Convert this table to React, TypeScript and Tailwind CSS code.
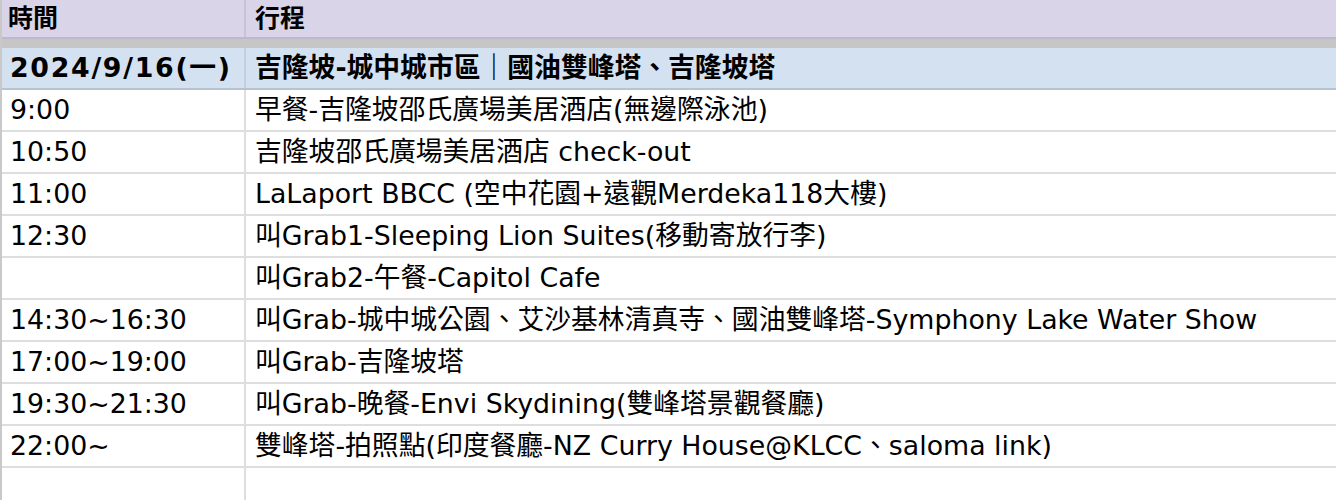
const rows = [
  { time: "9:00", plan: "早餐-吉隆坡邵氏廣場美居酒店(無邊際泳池)" },
  { time: "10:50", plan: "吉隆坡邵氏廣場美居酒店 check-out" },
  { time: "11:00", plan: "LaLaport BBCC (空中花園+遠觀Merdeka118大樓)" },
  { time: "12:30", plan: "叫Grab1-Sleeping Lion Suites(移動寄放行李)" },
  { time: "", plan: "叫Grab2-午餐-Capitol Cafe" },
  { time: "14:30~16:30", plan: "叫Grab-城中城公園、艾沙基林清真寺、國油雙峰塔-Symphony Lake Water Show" },
  { time: "17:00~19:00", plan: "叫Grab-吉隆坡塔" },
  { time: "19:30~21:30", plan: "叫Grab-晚餐-Envi Skydining(雙峰塔景觀餐廳)" },
  { time: "22:00~", plan: "雙峰塔-拍照點(印度餐廳-NZ Curry House@KLCC、saloma link)" },
  { time: "", plan: "" },
]

export default function App() {
  return (
    <div className="w-[1336px] h-[500px] overflow-hidden bg-white border-l-2 border-[#c9c9c9] font-['DejaVu_Sans','Noto_Sans_CJK_TC',sans-serif] text-black">
      {/* header */}
      <div className="flex h-[39px] bg-[#d9d4e7] border-b-2 border-[#bdb8cc] text-[25px] font-bold">
        <div className="w-[244px] shrink-0 border-r-2 border-[#c8c3d6] pl-[6px] flex items-center">時間</div>
        <div className="flex-1 pl-[9px] flex items-center">行程</div>
      </div>
      <div className="h-[9px] bg-[#c6c6c6]" />

      {/* day row */}
      <div className="flex h-[42px] bg-[#d4e1f1] border-b-2 border-[#b7c3d3] text-[26.8px] font-bold">
        <div className="w-[244px] shrink-0 border-r-2 border-[#c3cfdf] pl-[8px] flex items-center tracking-[1.7px]">2024/9/16(一)</div>
        <div className="flex-1 pl-[9px] flex items-center">吉隆坡-城中城市區｜國油雙峰塔、吉隆坡塔</div>
      </div>

      {rows.map((r, i) => (
        <div key={i} className="flex h-[42px] border-b-2 border-[#dedede] text-[26.8px]">
          <div className="w-[244px] shrink-0 border-r-2 border-[#dedede] pl-[8px] flex items-center">{r.time}</div>
          <div className="flex-1 pl-[9px] flex items-center whitespace-nowrap">{r.plan}</div>
        </div>
      ))}
    </div>
  )
}
